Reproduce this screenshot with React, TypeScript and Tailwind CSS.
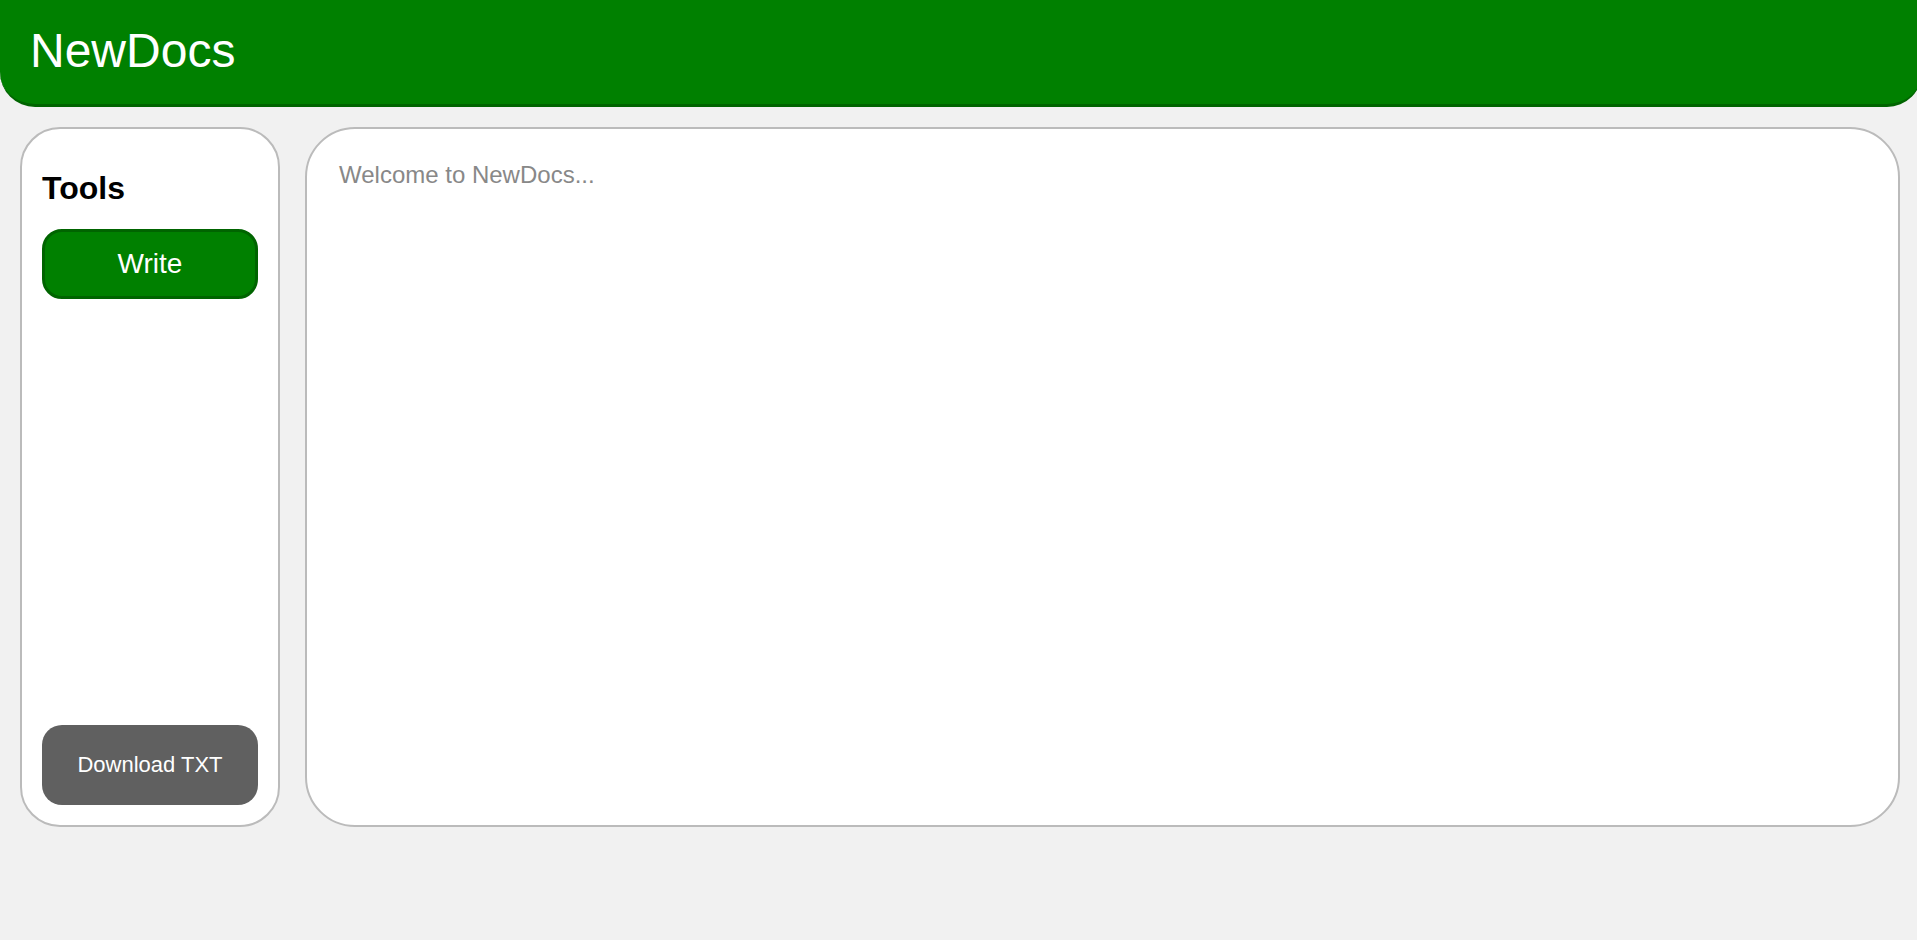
import React from 'react';

const App: React.FC = () => {
  return (
    <div className="h-[940px] overflow-hidden bg-[#f1f1f1] font-['Liberation_Sans',Arial,sans-serif]">
      <header className="w-[1922px] h-[107px] rounded-b-[35px] bg-[#008000] border-b-[3px] border-[#006400] pl-[30px] flex items-center">
        <h1 className="text-[48px] leading-none font-normal text-white mb-[2px]">NewDocs</h1>
      </header>

      <div className="flex gap-[25px] pl-5 pr-[17px] pt-5">
        <aside className="w-[260px] h-[700px] shrink-0 bg-white border-2 border-[#bbbbbb] rounded-[40px] p-5 flex flex-col">
          <h2 className="text-[32px] leading-none font-bold text-black mt-[23px] mb-[25px]">Tools</h2>
          <button className="h-[70px] rounded-[20px] bg-[#008000] border-[3px] border-[#006400] text-[28px] text-white">
            Write
          </button>
          <button className="mt-auto h-[80px] pb-[2px] rounded-[20px] bg-[#606060] text-[22px] text-white">
            Download TXT
          </button>
        </aside>

        <main className="flex-1 h-[700px] bg-white border-2 border-[#bbbbbb] rounded-[50px] pl-8 pr-8 pt-[34px]">
          <p className="text-2xl leading-none text-[#888888]">Welcome to NewDocs...</p>
        </main>
      </div>
    </div>
  );
};

export default App;
